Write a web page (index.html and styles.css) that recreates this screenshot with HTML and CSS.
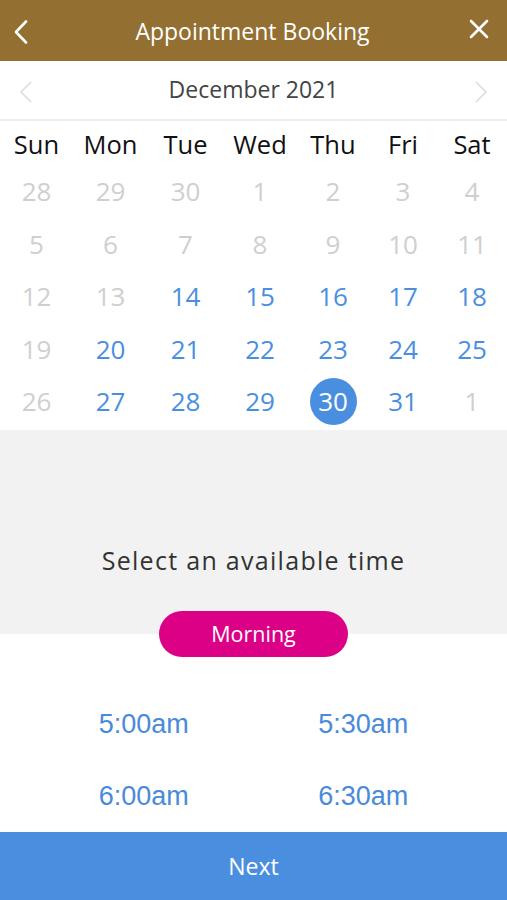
FILE: index.html
```html
<!DOCTYPE html>
<html lang="en">
<head>
  <meta charset="UTF-8" />
  <title>Appointment Booking</title>
  <link rel="stylesheet" href="styles.css">
</head>
<body>

  <header class="topbar">
    <button class="icono atras" aria-label="Back">
      <svg width="14" height="24" viewBox="0 0 14 24"><path d="M12 1.5 L2 12 L12 22.5" fill="none" stroke="#fff" stroke-width="2.6" stroke-linecap="round" stroke-linejoin="round"/></svg>
    </button>
    <h1>Appointment Booking</h1>
    <button class="icono cerrar" aria-label="Close">
      <svg width="20" height="20" viewBox="0 0 20 20"><path d="M2 2 L18 18 M18 2 L2 18" fill="none" stroke="#fff" stroke-width="2.6" stroke-linecap="round"/></svg>
    </button>
  </header>

  <!-- Mes -->
  <div class="mes">
    <svg class="flecha" width="14" height="22" viewBox="0 0 14 22"><path d="M12 1 L2 11 L12 21" fill="none" stroke="#dcdcdc" stroke-width="1.6"/></svg>
    <span>December 2021</span>
    <svg class="flecha" width="14" height="22" viewBox="0 0 14 22"><path d="M2 1 L12 11 L2 21" fill="none" stroke="#dcdcdc" stroke-width="1.6"/></svg>
  </div>

  <!-- Calendario -->
  <section class="calendario">
    <div class="fila dias-semana">
      <span>Sun</span><span>Mon</span><span>Tue</span><span>Wed</span><span>Thu</span><span>Fri</span><span>Sat</span>
    </div>
    <div class="fila">
      <span class="off">28</span><span class="off">29</span><span class="off">30</span><span class="off">1</span><span class="off">2</span><span class="off">3</span><span class="off">4</span>
    </div>
    <div class="fila">
      <span class="off">5</span><span class="off">6</span><span class="off">7</span><span class="off">8</span><span class="off">9</span><span class="off">10</span><span class="off">11</span>
    </div>
    <div class="fila">
      <span class="off">12</span><span class="off">13</span><span>14</span><span>15</span><span>16</span><span>17</span><span>18</span>
    </div>
    <div class="fila">
      <span class="off">19</span><span>20</span><span>21</span><span>22</span><span>23</span><span>24</span><span>25</span>
    </div>
    <div class="fila">
      <span class="off">26</span><span>27</span><span>28</span><span>29</span><span><b class="activo">30</b></span><span>31</span><span class="off">1</span>
    </div>
  </section>

  <!-- Horarios -->
  <section class="horarios">
    <h2>Select an available time</h2>
    <div class="turno">Morning</div>
  </section>

  <section class="horas">
    <span>5:00am</span>
    <span>5:30am</span>
    <span>6:00am</span>
    <span>6:30am</span>
  </section>

  <button class="siguiente">Next</button>

</body>
</html>
```

FILE: styles.css
```css
body {
  font-family: "Open Sans", "Noto Sans", sans-serif;
  margin: 0;
  width: 507px;
  height: 900px;
  display: flex;
  flex-direction: column;
  background-color: #fff;
  overflow: hidden;
}
button {
  font-family: inherit;
  border: none;
  background: none;
  padding: 0;
  cursor: pointer;
}
.topbar {
  height: 61px;
  background-color: #946f32;
  display: flex;
  align-items: center;
  justify-content: space-between;
  padding: 0 18px 0 14px;
  flex-shrink: 0;
}
.topbar h1 {
  margin: 0;
  color: #fff;
  font-size: 23px;
  font-weight: 400;
  padding-left: 8px;
}
.icono {
  display: flex;
  align-items: center;
}
.atras {
  margin-top: 2px;
}
.cerrar {
  margin-top: -4px;
}
.mes {
  height: 58px;
  display: flex;
  align-items: center;
  justify-content: space-between;
  padding: 0 19px 0 19px;
  border-bottom: 2px solid #ececec;
  flex-shrink: 0;
}
.mes span {
  font-size: 23px;
  color: #444;
  margin-top: -2px;
}
.flecha {
  margin-top: 4px;
}
.calendario {
  padding-bottom: 2px;
  flex-shrink: 0;
}
.fila {
  display: grid;
  grid-template-columns: 73px 75px 75px 74px 72px 68px 70px;
  height: 52.5px;
  align-items: center;
  justify-items: center;
}
.fila span {
  font-size: 26px;
  color: #4a8fdf;
  display: flex;
  align-items: center;
  justify-content: center;
}
.fila .off {
  color: #cfcfcf;
}
.dias-semana {
  height: 44px;
}
.dias-semana span {
  font-size: 25.5px;
  color: #111;
  margin-top: 2px;
}
.activo {
  width: 47px;
  height: 47px;
  border-radius: 50%;
  background-color: #4a8fdf;
  color: #fff;
  font-weight: 400;
  display: flex;
  align-items: center;
  justify-content: center;
}
.horarios {
  background-color: #f2f2f2;
  height: 204px;
  display: flex;
  flex-direction: column;
  align-items: center;
  justify-content: flex-end;
  flex-shrink: 0;
}
.horarios h2 {
  margin: 0 0 34px;
  font-size: 25px;
  font-weight: 400;
  letter-spacing: 1.3px;
  color: #333;
}
.turno {
  width: 189px;
  height: 46px;
  border-radius: 23px;
  background-color: #dc0086;
  color: #fff;
  font-size: 21.5px;
  display: flex;
  align-items: center;
  justify-content: center;
  margin-bottom: -23px;
}
.horas {
  flex: 1;
  min-height: 0;
  overflow: hidden;
  display: grid;
  grid-template-columns: 1fr 1fr;
  grid-auto-rows: 72px;
  align-items: center;
  align-content: start;
  padding: 55px 34px 0 34px;
}
.horas span {
  font-family: "Liberation Sans", Arial, sans-serif;
  font-size: 27px;
  color: #4a8ada;
  text-align: center;
}
.siguiente {
  height: 68px;
  background-color: #4a8fdf;
  color: #fff;
  font-size: 23px;
  flex-shrink: 0;
}
```
